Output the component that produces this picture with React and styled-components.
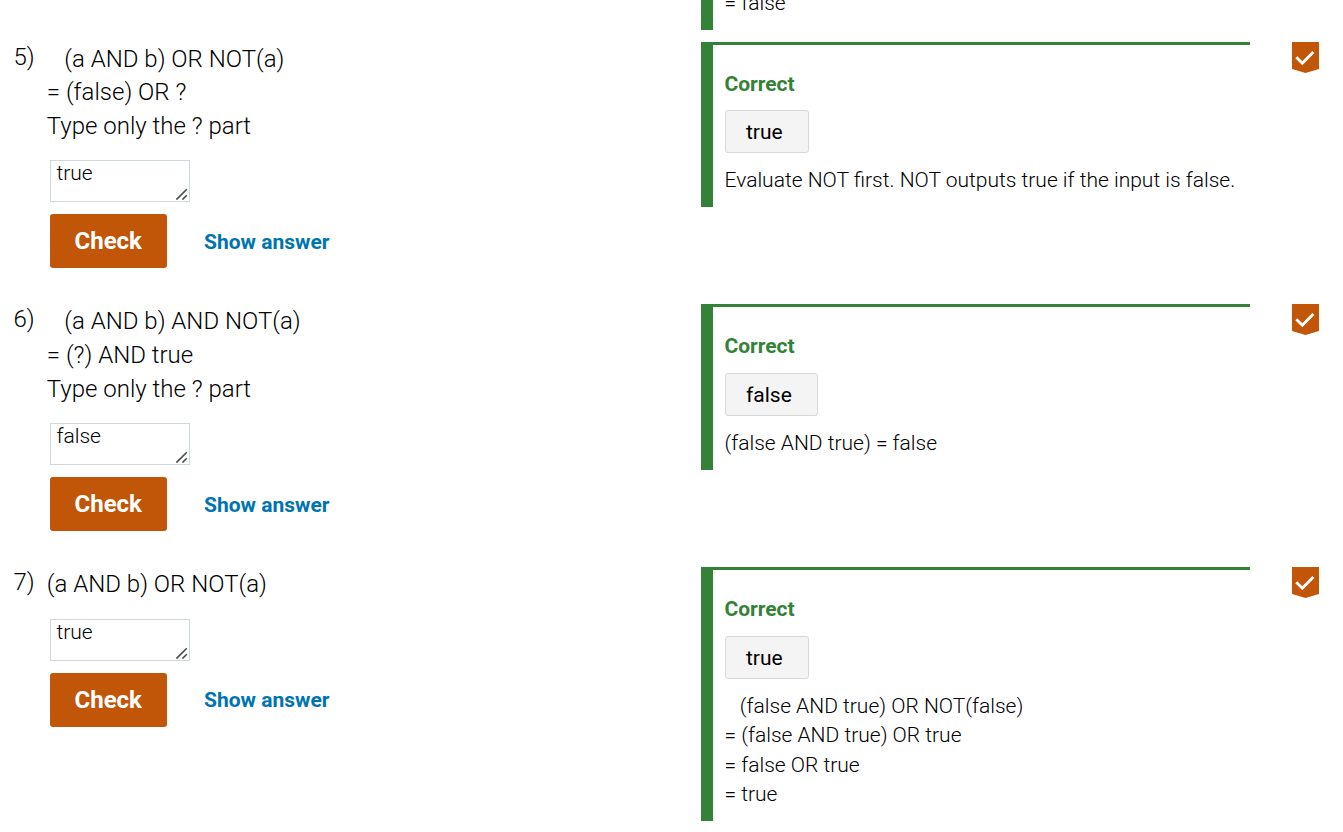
import React from "react";
import styled, { createGlobalStyle } from "styled-components";

const GlobalStyle = createGlobalStyle`
  * { box-sizing: border-box; }
  html, body { margin: 0; height: 100%; overflow: hidden; background: #fff; }
  body { font-family: Roboto, "Liberation Sans", sans-serif; font-weight: 300; color: #000; }
`;

const Page = styled.main`
  display: flex;
  flex-direction: column;
  width: 1343px;
  height: 832px;
  overflow: hidden;
`;

const Row = styled.section`
  display: grid;
  grid-template-columns: 34px 653.5px 549px 1fr;
  align-items: start;
  flex: none;
  height: ${(p) => p.$height}px;
  padding-left: 13.5px;
`;

const PreviousRow = styled(Row)`
  align-content: end;
  padding-bottom: 12px;
`;

const Number = styled.div`
  font-size: 24px;
  line-height: 30px;
`;

const Question = styled.div`
  display: flex;
  flex-direction: column;
`;

const Prompt = styled.div`
  margin-left: -0.7px;
  padding-top: 0.9px;
  font-size: 24px;
  line-height: 33.75px;
  white-space: pre;
`;

const AnswerField = styled.div`
  position: relative;
  width: 140px;
  height: 42px;
  margin: 16.5px 0 12px 2.5px;
`;

const AnswerInput = styled.textarea`
  display: block;
  width: 100%;
  height: 100%;
  margin: 0;
  padding: 0 5.5px;
  border: 1px solid #cfd8dc;
  border-radius: 0;
  outline: none;
  overflow: hidden;
  resize: none;
  background: #fff;
  color: #000;
  font: 300 21px/25px Roboto, "Liberation Sans", sans-serif;
`;

const ResizeGrip = styled.svg`
  position: absolute;
  right: 2px;
  bottom: 2px;
  width: 12px;
  height: 12px;
  pointer-events: none;
`;

const Actions = styled.div`
  display: flex;
  align-items: center;
  gap: 37px;
  padding-left: 2.5px;
`;

const CheckButton = styled.button`
  width: 117px;
  height: 54px;
  padding: 0 0.6px 0 0;
  border: 0;
  border-radius: 3px;
  background: #c25608;
  color: #fff;
  font: 700 24px/54px Roboto, "Liberation Sans", sans-serif;
`;

const ShowAnswer = styled.button`
  padding: 1.4px 0 0;
  border: 0;
  background: none;
  color: #0073b1;
  font: 700 21px/30px Roboto, "Liberation Sans", sans-serif;
`;

const Feedback = styled.div`
  height: ${(p) => p.$height}px;
  padding: 24px 0 0 11.5px;
  border-top: 3px solid #338237;
  border-left: 12px solid #338237;
  border-image: linear-gradient(#338237, #338237) 1;
  border-image-width: 3px 0 0 12px;
`;

const FeedbackTail = styled.div`
  grid-column: 3;
  padding: 0 0 11.4px 11.5px;
  border-left: 12px solid #338237;
`;

const Verdict = styled.div`
  color: #338237;
  font-size: 21px;
  font-weight: 700;
  line-height: 30px;
`;

const AnswerChip = styled.div`
  width: fit-content;
  height: 43px;
  margin: 11.4px 0 13.1px;
  padding: 0 25.2px 0 20.5px;
  border: 1px solid #d8d8d8;
  border-radius: 3px;
  background: #f4f4f4;
  font-size: 21px;
  font-weight: 400;
  line-height: 42px;
`;

const Explanation = styled.div`
  font-size: 21px;
  line-height: 29.4px;
  white-space: pre;
`;

const Marker = styled.svg`
  display: block;
  width: 27px;
  height: 31px;
  margin-left: 42px;
`;

const questions = [
  {
    number: 5,
    height: 262.6,
    feedbackHeight: 165,
    prompt: "\u00a0\u00a0\u00a0(a AND b) OR NOT(a)\n= (false) OR ?\nType only the ? part",
    answer: "true",
    explanation: "Evaluate NOT first. NOT outputs true if the input is false.",
  },
  {
    number: 6,
    height: 263,
    feedbackHeight: 166,
    prompt: "\u00a0\u00a0\u00a0(a AND b) AND NOT(a)\n= (?) AND true\nType only the ? part",
    answer: "false",
    explanation: "(false AND true) = false",
  },
  {
    number: 7,
    height: 264.6,
    feedbackHeight: 254,
    prompt: "(a AND b) OR NOT(a)",
    answer: "true",
    explanation:
      "\u00a0\u00a0\u00a0(false AND true) OR NOT(false)\n= (false AND true) OR true\n= false OR true\n= true",
  },
];

function CompletionMarker() {
  return (
    <Marker viewBox="0 0 27 31" aria-label="Completed">
      <path d="M0 0h27v27l-13.5 4L0 27z" fill="#c25608" />
      <path d="M4.3 15.3l6 6L21.3 10" fill="none" stroke="#fff" strokeWidth="2.8" />
    </Marker>
  );
}

function ShortAnswer({ item }) {
  return (
    <Row $height={item.height}>
      <Number>{item.number})</Number>
      <Question>
        <Prompt>{item.prompt}</Prompt>
        <AnswerField>
          <AnswerInput defaultValue={item.answer} spellCheck={false} />
          <ResizeGrip viewBox="0 0 12 12">
            <path d="M0.4 11.6L10.8 1.2M6.4 11.6L10.8 7.2" stroke="#4d4d4d" strokeWidth="1.6" />
          </ResizeGrip>
        </AnswerField>
        <Actions>
          <CheckButton>Check</CheckButton>
          <ShowAnswer>Show answer</ShowAnswer>
        </Actions>
      </Question>
      <Feedback $height={item.feedbackHeight}>
        <Verdict>Correct</Verdict>
        <AnswerChip>{item.answer}</AnswerChip>
        <Explanation>{item.explanation}</Explanation>
      </Feedback>
      <CompletionMarker />
    </Row>
  );
}

export default function App() {
  return (
    <>
      <GlobalStyle />
      <Page>
        <PreviousRow $height={41.8}>
          <FeedbackTail>
            <Explanation>= false</Explanation>
          </FeedbackTail>
        </PreviousRow>
        {questions.map((item) => (
          <ShortAnswer key={item.number} item={item} />
        ))}
      </Page>
    </>
  );
}
